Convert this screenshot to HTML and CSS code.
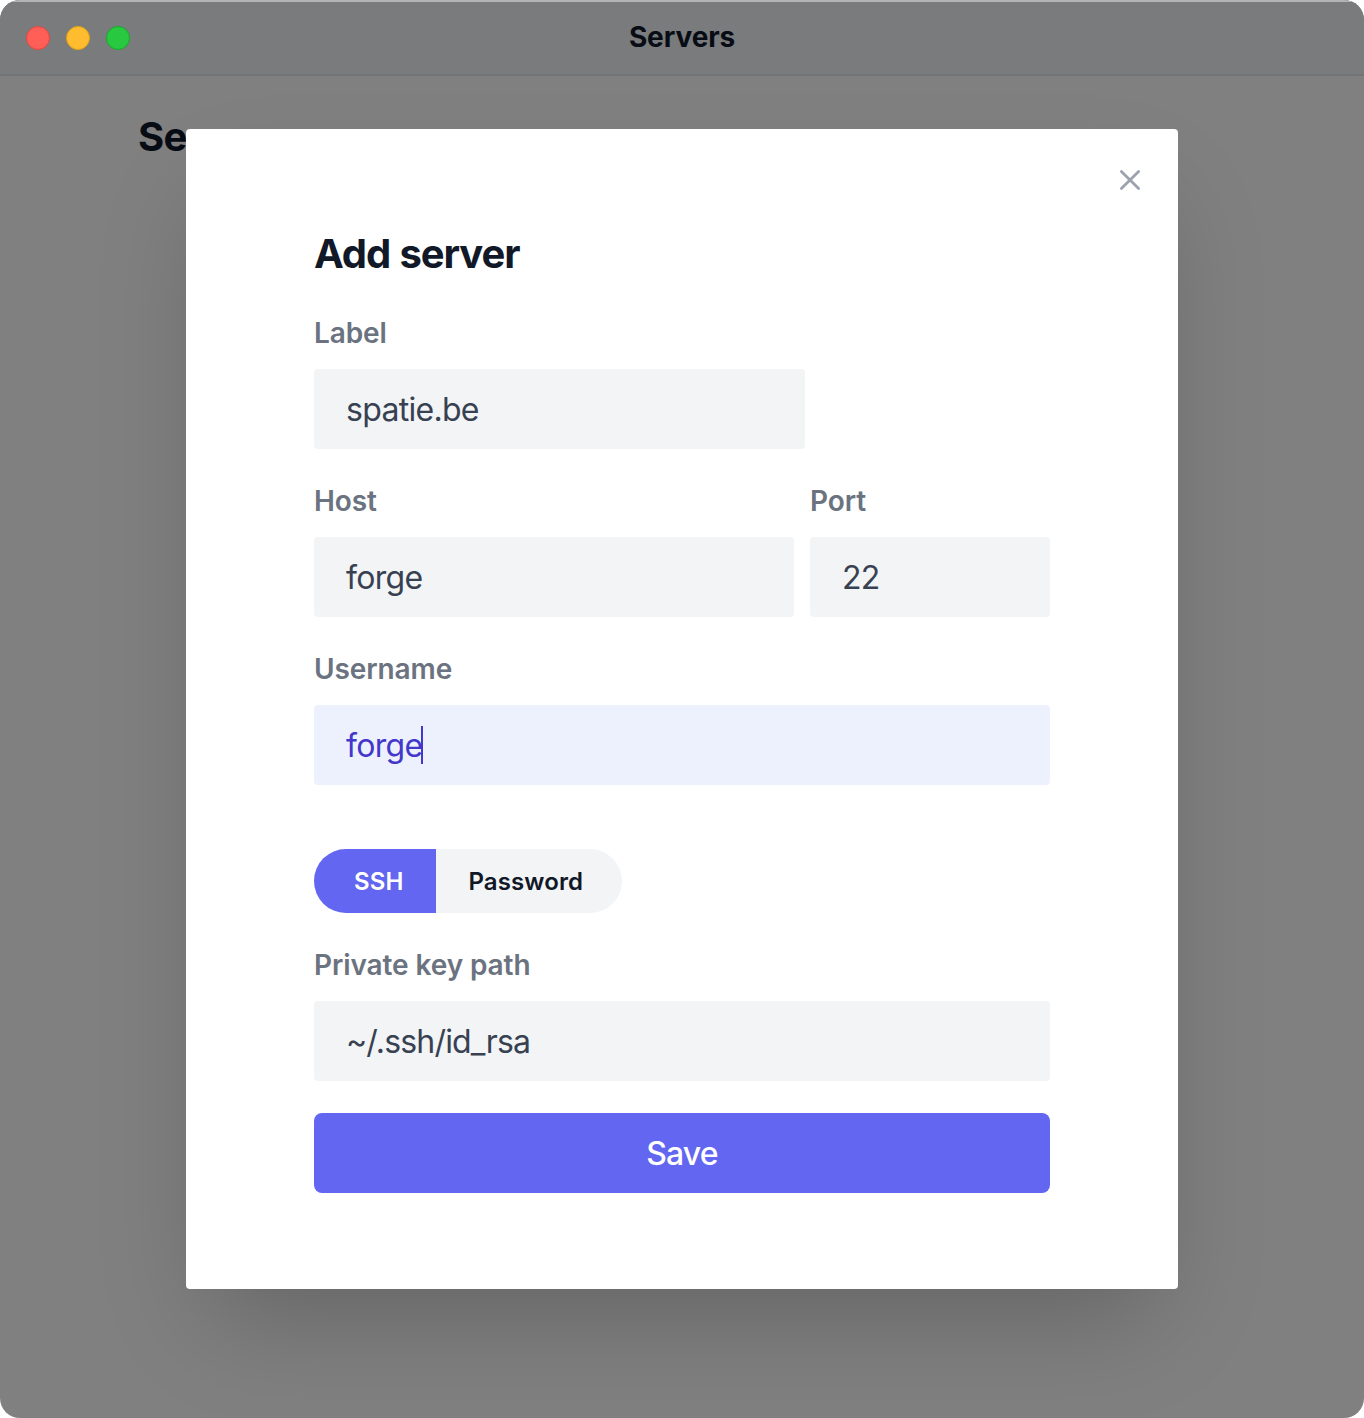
FILE: index.html
```html
<!DOCTYPE html>
<html lang="en">
<head>
<meta charset="utf-8">
<title>Servers</title>
<link rel="stylesheet" href="styles.css">
</head>
<body>
<div class="window">
  <header class="titlebar">
    <div class="lights"><span class="light red"></span><span class="light yellow"></span><span class="light green"></span></div>
    <div class="window-title">Servers</div>
  </header>
  <main class="page"><h1 class="page-title">Servers</h1></main>
  <div class="overlay">
    <section class="modal">
      <svg class="close" viewBox="0 0 20 20" width="20" height="20"><path d="M1.4 1.4L18.6 18.6M18.6 1.4L1.4 18.6"/></svg>
      <h2 class="heading">Add server</h2>
      <div class="field short"><div class="label">Label</div><div class="input">spatie.be</div></div>
      <div class="row">
        <div class="field host"><div class="label">Host</div><div class="input">forge</div></div>
        <div class="field port"><div class="label">Port</div><div class="input">22</div></div>
      </div>
      <div class="field"><div class="label">Username</div><div class="input focused">forge<i class="caret"></i></div></div>
      <div class="toggle"><div class="option active">SSH</div><div class="option">Password</div></div>
      <div class="field"><div class="label">Private key path</div><div class="input path">~/.ssh/id_rsa</div></div>
      <div class="save">Save</div>
    </section>
  </div>
</div>
</body>
</html>
```
FILE: styles.css
```css
* { box-sizing: border-box; }
body { margin: 0; background: #fff; font-family: Inter, sans-serif; color: #111827; }
.window { position: relative; width: 1364px; height: 1418px; border-radius: 20px; overflow: hidden; background: #808080; }
.titlebar { height: 76px; display: flex; align-items: center; background: #797b7c; border-top: 2px solid #b2b4b5; border-bottom: 2px solid #737475; padding-left: 26px; }
.lights { display: flex; gap: 16px; width: 104px; }
.light { width: 24px; height: 24px; border-radius: 50%; border: 1px solid; }
.red { background: #ff5f57; border-color: #e2463f; }
.yellow { background: #febc2e; border-color: #e1a116; }
.green { background: #28c840; border-color: #12ac28; }
.window-title { flex: 1; text-align: center; padding: 0 130px 2px 0; font-size: 28px; font-weight: 650; letter-spacing: -0.1px; color: #080c14; }
.page { padding: 37px 138px; }
.page-title { margin: 0; font-size: 40px; line-height: 48px; font-weight: 700; letter-spacing: -0.8px; color: #080c14; }
.overlay { position: absolute; inset: 0; padding: 129px 186px; }
.modal { position: relative; width: 992px; height: 1160px; padding: 97px 128px 96px; background: #fff; border-radius: 4px; box-shadow: 0 50px 100px -24px rgba(0,0,0,.22); }
.close { position: absolute; left: 934px; top: 41px; overflow: visible; fill: none; stroke: #9ca3af; stroke-width: 2.8; stroke-linecap: round; }
.heading { margin: 0 0 31px; font-size: 40px; line-height: 56px; font-weight: 700; letter-spacing: -1.1px; word-spacing: 1px; }
.label { height: 40px; margin-bottom: 16px; line-height: 41px; font-size: 28px; font-weight: 570; letter-spacing: -0.1px; color: #6b7280; }
.field { margin-bottom: 32px; }
.input { height: 80px; display: flex; align-items: center; padding: 1px 32px 0; background: #f3f4f6; border-radius: 4px; font-size: 32px; letter-spacing: -0.7px; color: #374151; }
.path { letter-spacing: -0.82px; }
.short { width: 491px; }
.row { display: flex; gap: 16px; }
.host { width: 480px; }
.port { width: 240px; }
.focused { background: #edf1fe; color: #4338ca; }
.caret { width: 2px; height: 38px; margin: 0 0 2px -1.5px; background: #4338ca; }
.toggle { display: flex; width: 308px; height: 64px; margin: 64px 0 32px; border-radius: 32px; overflow: hidden; background: #f3f4f6; font-size: 24px; font-weight: 570; letter-spacing: 0.1px; }
.option { display: flex; align-items: center; padding: 1px 0 0 32.5px; }
.active { width: 122px; padding-left: 40px; background: #6366f1; color: #fff; }
.save { height: 80px; display: flex; align-items: center; justify-content: center; padding-top: 1px; border-radius: 8px; background: #6366f1; color: #fff; font-size: 32px; font-weight: 500; letter-spacing: -0.8px; }
```
